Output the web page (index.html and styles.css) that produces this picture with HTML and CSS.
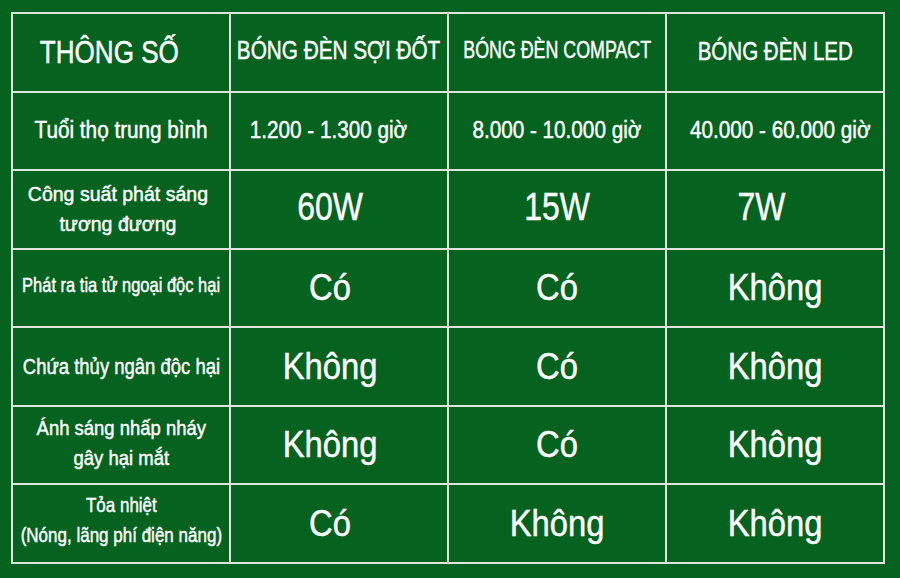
FILE: index.html
```html
<!DOCTYPE html>
<html lang="vi">
<head>
<meta charset="utf-8">
<title>Bảng so sánh bóng đèn</title>
<link rel="stylesheet" href="styles.css">
</head>
<body>
<div class="table">
  <div class="cell"><span class="t hd-param">THÔNG SỐ</span></div>
  <div class="cell"><span class="t hd-soi">BÓNG ĐÈN SỢI ĐỐT</span></div>
  <div class="cell"><span class="t hd-compact">BÓNG ĐÈN COMPACT</span></div>
  <div class="cell"><span class="t hd-led">BÓNG ĐÈN LED</span></div>

  <div class="cell"><span class="t r1">Tuổi thọ trung bình</span></div>
  <div class="cell c1"><span class="t r1 r1-a">1.200 - 1.300 giờ</span></div>
  <div class="cell"><span class="t r1">8.000 - 10.000 giờ</span></div>
  <div class="cell"><span class="t r1 r1-c">40.000 - 60.000 giờ</span></div>

  <div class="cell"><span class="t two lb-cong"><span class="ln">Công suất phát sáng</span><span class="ln">tương đương</span></span></div>
  <div class="cell c1"><span class="t watt">60W</span></div>
  <div class="cell"><span class="t watt">15W</span></div>
  <div class="cell"><span class="t watt watt-7">7W</span></div>

  <div class="cell"><span class="t lb-phat">Phát ra tia tử ngoại độc hại</span></div>
  <div class="cell c1"><span class="t big">Có</span></div>
  <div class="cell"><span class="t big">Có</span></div>
  <div class="cell"><span class="t big">Không</span></div>

  <div class="cell"><span class="t lb-chua">Chứa thủy ngân độc hại</span></div>
  <div class="cell c1"><span class="t big">Không</span></div>
  <div class="cell"><span class="t big">Có</span></div>
  <div class="cell"><span class="t big">Không</span></div>

  <div class="cell"><span class="t two lb-anh"><span class="ln">Ánh sáng nhấp nháy</span><span class="ln">gây hại mắt</span></span></div>
  <div class="cell c1"><span class="t big">Không</span></div>
  <div class="cell"><span class="t big">Có</span></div>
  <div class="cell"><span class="t big">Không</span></div>

  <div class="cell"><span class="t two lb-toa"><span class="ln">Tỏa nhiệt</span><span class="ln">(Nóng, lãng phí điện năng)</span></span></div>
  <div class="cell c1"><span class="t big">Có</span></div>
  <div class="cell"><span class="t big">Không</span></div>
  <div class="cell"><span class="t big">Không</span></div>
</div>
</body>
</html>
```
FILE: styles.css
```css
html, body {
  margin: 0;
  padding: 0;
}
body {
  background: #05621f;
  width: 900px;
  height: 578px;
  overflow: hidden;
  font-family: "Liberation Sans", Arial, sans-serif;
  color: #ffffff;
}
.table {
  margin: 12px 0 0 11px;
  width: 874px;
  height: 552px;
  box-sizing: border-box;
  padding: 2px;
  gap: 2px;
  background: #dde6dd;
  display: grid;
  grid-template-columns: repeat(4, minmax(0, 1fr));
  grid-template-rows: repeat(7, minmax(0, 1fr));
}
.cell {
  background: #05621f;
  display: flex;
  align-items: center;
  justify-content: center;
  text-align: center;
  white-space: nowrap;
  min-width: 0;
}
.c1 {
  padding-right: 18px;
}
.t {
  display: inline-block;
  flex: none;
  transform-origin: center center;
  line-height: 1;
  -webkit-text-stroke: 0.45px #ffffff;
}
.hd-param {
  font-size: 32px;
  transform: scaleX(0.815);
  margin-right: 24px;
}
.hd-soi {
  font-size: 25px;
  transform: scaleX(0.83);
  margin-top: -4px;
}
.hd-compact {
  font-size: 23px;
  transform: scaleX(0.775);
  margin-top: -4px;
}
.hd-led {
  font-size: 26px;
  transform: scaleX(0.79);
  margin-top: -2px;
}
.r1 {
  font-size: 23px;
  transform: scaleX(0.9);
}
.r1-a {
  margin-right: 4px;
}
.r1-c {
  margin-left: 10px;
}
.two {
  line-height: 30px;
}
.ln {
  display: block;
}
.lb-cong {
  font-size: 21px;
  transform: scaleX(0.93);
  margin-right: 6px;
}
.lb-phat {
  font-size: 21px;
  transform: scaleX(0.785);
  margin-top: -6px;
}
.lb-chua {
  font-size: 22px;
  transform: scaleX(0.84);
}
.lb-anh {
  font-size: 21px;
  transform: scaleX(0.88);
  margin-top: -4px;
}
.lb-toa {
  font-size: 21px;
  transform: scaleX(0.81);
  margin-top: -8px;
}
.watt {
  font-size: 38px;
  transform: scaleX(0.84);
  margin-top: -4px;
}
.watt-7 {
  margin-right: 28px;
}
.big {
  font-size: 36px;
  transform: scaleX(0.91);
}
```
